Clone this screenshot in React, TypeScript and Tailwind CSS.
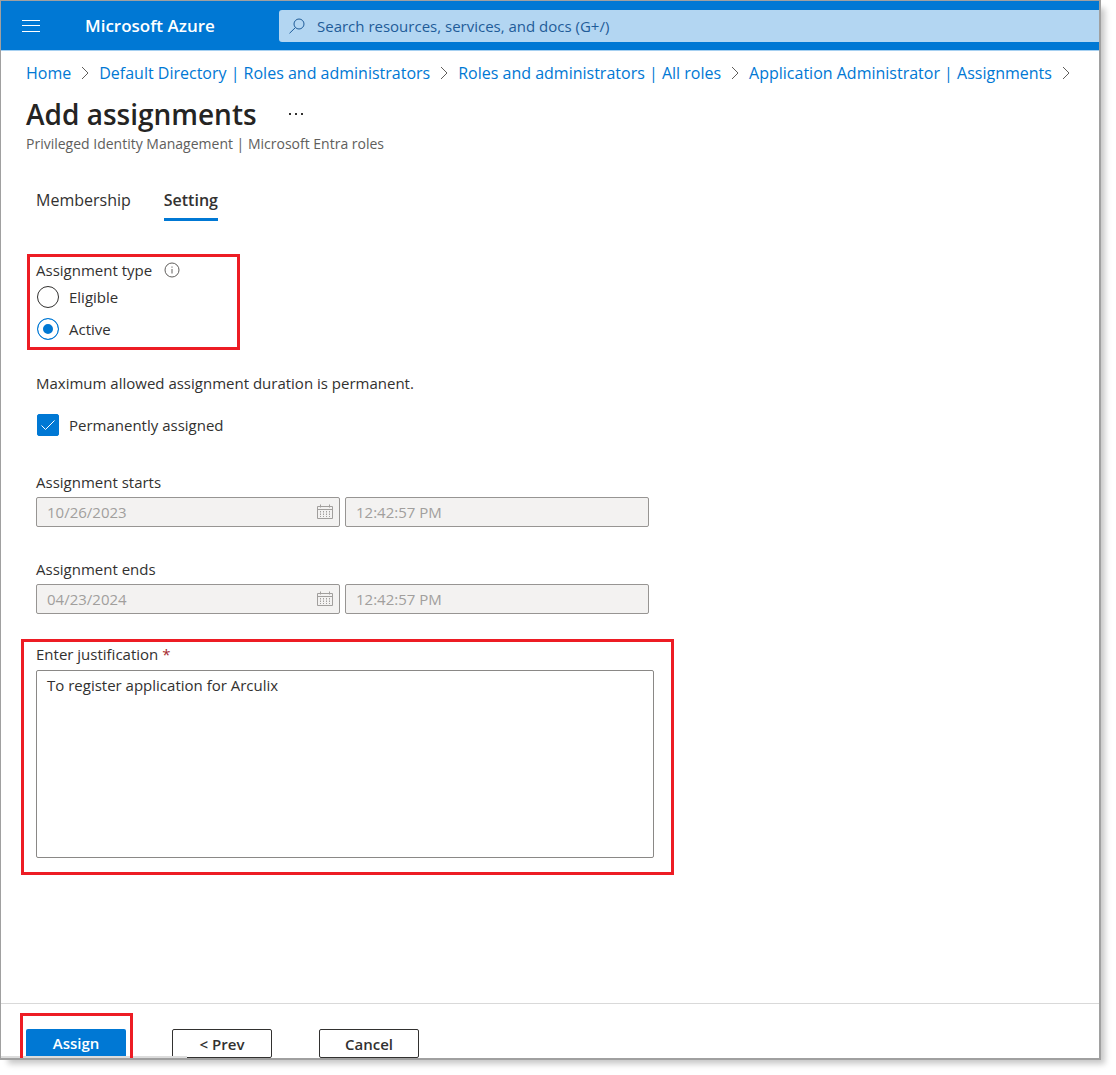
import { useState } from "react";

const crumbs = [
  "Home",
  "Default Directory | Roles and administrators",
  "Roles and administrators | All roles",
  "Application Administrator | Assignments",
];

const periods = [
  { id: "starts", label: "Assignment starts", date: "10/26/2023", time: "12:42:57 PM" },
  { id: "ends", label: "Assignment ends", date: "04/23/2024", time: "12:42:57 PM" },
];

function ChevronIcon() {
  return (
    <svg width="8" height="14" viewBox="0 0 8 14" fill="none" stroke="#605e5c" className="shrink-0">
      <path d="M1 1l6 6-6 6" />
    </svg>
  );
}

function CalendarIcon() {
  return (
    <svg width="16" height="16" viewBox="0 0 16 16" fill="none" stroke="#a19f9d" className="shrink-0">
      <path d="M.5 2.5h15v12H.5zM.5 5.5h15M3.5 .5v3M12.5 .5v3" />
      <path d="M3.5 7v6M6.5 7v6M9.5 7v6M12.5 7v6" strokeDasharray="1.5 1" />
    </svg>
  );
}

function InfoIcon() {
  return (
    <svg width="16" height="16" viewBox="0 0 16 16" fill="none" stroke="#605e5c" className="shrink-0">
      <circle cx="8" cy="8" r="7" />
      <path d="M8 7v4.5M8 4.5v1.2" />
    </svg>
  );
}

function TopBar() {
  return (
    <header className="flex h-[50px] items-center border-b border-[#a6d0f1] bg-[#0078d4]">
      <button type="button" aria-label="Show portal menu" className="ml-[21px] text-white">
        <svg width="18" height="12" viewBox="0 0 18 12" fill="none" stroke="currentColor">
          <path d="M0 .5h18M0 5.5h18M0 11.5h18" />
        </svg>
      </button>
      <a href="#" className="ml-[45px] w-[194px] shrink-0 text-[17px] font-semibold text-white">
        Microsoft Azure
      </a>
      <div className="flex h-8 flex-1 items-center gap-3 rounded-l-[3px] bg-[#b3d6f2] pl-2.5">
        <svg width="16" height="16" viewBox="0 0 16 16" fill="none" stroke="#1f5c99" className="shrink-0">
          <circle cx="10" cy="6" r="5" />
          <path d="M6.4 9.6L.5 15.3" />
        </svg>
        <input
          type="search"
          aria-label="Search"
          placeholder="Search resources, services, and docs (G+/)"
          className="h-full min-w-0 flex-1 bg-transparent text-[15px] text-[#1f5c99] outline-none placeholder:text-[#1f5c99]"
        />
      </div>
    </header>
  );
}

export default function App() {
  const [type, setType] = useState("Active");
  const [permanent, setPermanent] = useState(true);
  const [reason, setReason] = useState("To register application for Arculix");

  return (
    <div className="flex min-h-screen bg-white pr-[15px] pb-[15px] font-['Open_Sans',sans-serif] text-[15px] leading-6 text-[#323130]">
      <div className="relative flex min-w-0 flex-1 flex-col border border-r-2 border-b-2 border-[#a0a0a0] bg-white shadow-[6px_6px_6px_-2px_rgba(0,0,0,0.22)]">
        <TopBar />

        <main className="flex-1 pb-8">
          <nav aria-label="Breadcrumb" className="mt-2.5 ml-[25px]">
            <ol className="flex items-center text-base leading-6 whitespace-nowrap">
              {crumbs.map((crumb) => (
                <li key={crumb} className="flex items-center">
                  <a href="#" className="text-[#0078d4]">
                    {crumb}
                  </a>
                  <span className="mx-2.5">
                    <ChevronIcon />
                  </span>
                </li>
              ))}
            </ol>
          </nav>

          <div className="mt-[9px] ml-[25px] flex items-center gap-8">
            <h1 className="text-[28px] leading-10 font-semibold text-[#252423]">Add assignments</h1>
            <button type="button" aria-label="More options">
              <svg width="14" height="2" viewBox="0 0 14 2" fill="#323130">
                <path d="M0 0h2v2H0zM6 0h2v2H6zM12 0h2v2h-2z" />
              </svg>
            </button>
          </div>
          <p className="ml-[25px] text-sm leading-5 text-[#605e5c]">
            Privileged Identity Management | Microsoft Entra roles
          </p>

          <div role="tablist" className="mt-[34px] ml-[35px] flex gap-[33px] text-base leading-6">
            <button type="button" role="tab" aria-selected="false" className="border-b-3 border-transparent pb-1.5">
              Membership
            </button>
            <button
              type="button"
              role="tab"
              aria-selected="true"
              className="border-b-3 border-[#0078d4] pb-1.5 font-semibold"
            >
              Setting
            </button>
          </div>

          <div
            role="radiogroup"
            aria-labelledby="type-label"
            className="mt-[33px] ml-[26px] w-[213px] border-3 border-[#ed1c24] px-1.5 pt-[3px] pb-0.5"
          >
            <div className="mb-px flex h-5 items-center gap-3">
              <span id="type-label">Assignment type</span>
              <InfoIcon />
            </div>
            {["Eligible", "Active"].map((option) => (
              <label key={option} className="flex h-8 items-center gap-2.5 pl-px">
                <input
                  type="radio"
                  name="type"
                  checked={type === option}
                  onChange={() => setType(option)}
                  className="size-[22px] appearance-none rounded-full border border-[#323130] checked:border-[#0078d4] checked:bg-[#0078d4] checked:shadow-[inset_0_0_0_5px_white]"
                />
                {option}
              </label>
            ))}
          </div>

          <div className="ml-[35px]">
            <p className="mt-[21px]">Maximum allowed assignment duration is permanent.</p>
            <label className="mt-[18px] flex h-6 w-fit items-center gap-2.5 pl-px">
              <span className="grid">
                <input
                  type="checkbox"
                  checked={permanent}
                  onChange={(e) => setPermanent(e.target.checked)}
                  className="peer col-start-1 row-start-1 size-[22px] appearance-none rounded-xs border border-[#323130] checked:border-[#0078d4] checked:bg-[#0078d4]"
                />
                <svg
                  viewBox="0 0 22 22"
                  fill="none"
                  stroke="white"
                  className="pointer-events-none invisible col-start-1 row-start-1 size-[22px] peer-checked:visible"
                >
                  <path d="M4.5 11.5l4 4 9-9" />
                </svg>
              </span>
              Permanently assigned
            </label>
          </div>

          <div className="mt-[33px] ml-[35px] flex flex-col gap-[30px]">
            {periods.map((period) => (
              <div key={period.id}>
                <label htmlFor={`${period.id}-date`}>{period.label}</label>
                <div className="mt-[3px] flex gap-[5px] text-[#a19f9d]">
                  <div className="flex h-[30px] w-[304px] items-center rounded-xs border border-[#979593] bg-[#f3f2f1] pr-1.5 pl-2.5">
                    <input
                      id={`${period.id}-date`}
                      disabled
                      value={period.date}
                      className="min-w-0 flex-1 bg-transparent"
                    />
                    <CalendarIcon />
                  </div>
                  <input
                    aria-label={`${period.label} time`}
                    disabled
                    value={period.time}
                    className="h-[30px] w-[304px] rounded-xs border border-[#979593] bg-[#f3f2f1] px-2.5"
                  />
                </div>
              </div>
            ))}
          </div>

          <div className="mt-[25px] ml-5 w-[653px] border-3 border-[#ed1c24] px-3 pb-3.5">
            <label htmlFor="reason" className="block">
              Enter justification <span className="text-[#a4262c]">*</span>
            </label>
            <textarea
              id="reason"
              value={reason}
              onChange={(e) => setReason(e.target.value)}
              className="mt-1 block h-[188px] w-[618px] resize-none rounded-xs border border-[#8a8886] px-2.5 py-0.5 outline-none"
            />
          </div>
        </main>

        <footer className="flex items-end border-t border-[#d9d9d9] pt-[9px] font-semibold">
          <div className="relative z-10 ml-[19px] w-[113px] border-3 border-b-0 border-[#ed1c24] pt-[13px] pr-1 pb-0.5 pl-[3px]">
            <button type="button" className="block h-[27px] w-full rounded-t-xs bg-[#0078d4] text-white">
              Assign
            </button>
          </div>
          <button type="button" className="ml-[39px] h-[29px] w-[100px] rounded-xs border border-[#323130]">
            &lt; Prev
          </button>
          <button type="button" className="ml-[47px] h-[29px] w-[100px] rounded-xs border border-[#323130]">
            Cancel
          </button>
        </footer>
        <div className="absolute bottom-0 left-0 h-0.5 w-[186px] bg-[#dcdcdc]" />
      </div>
    </div>
  );
}
